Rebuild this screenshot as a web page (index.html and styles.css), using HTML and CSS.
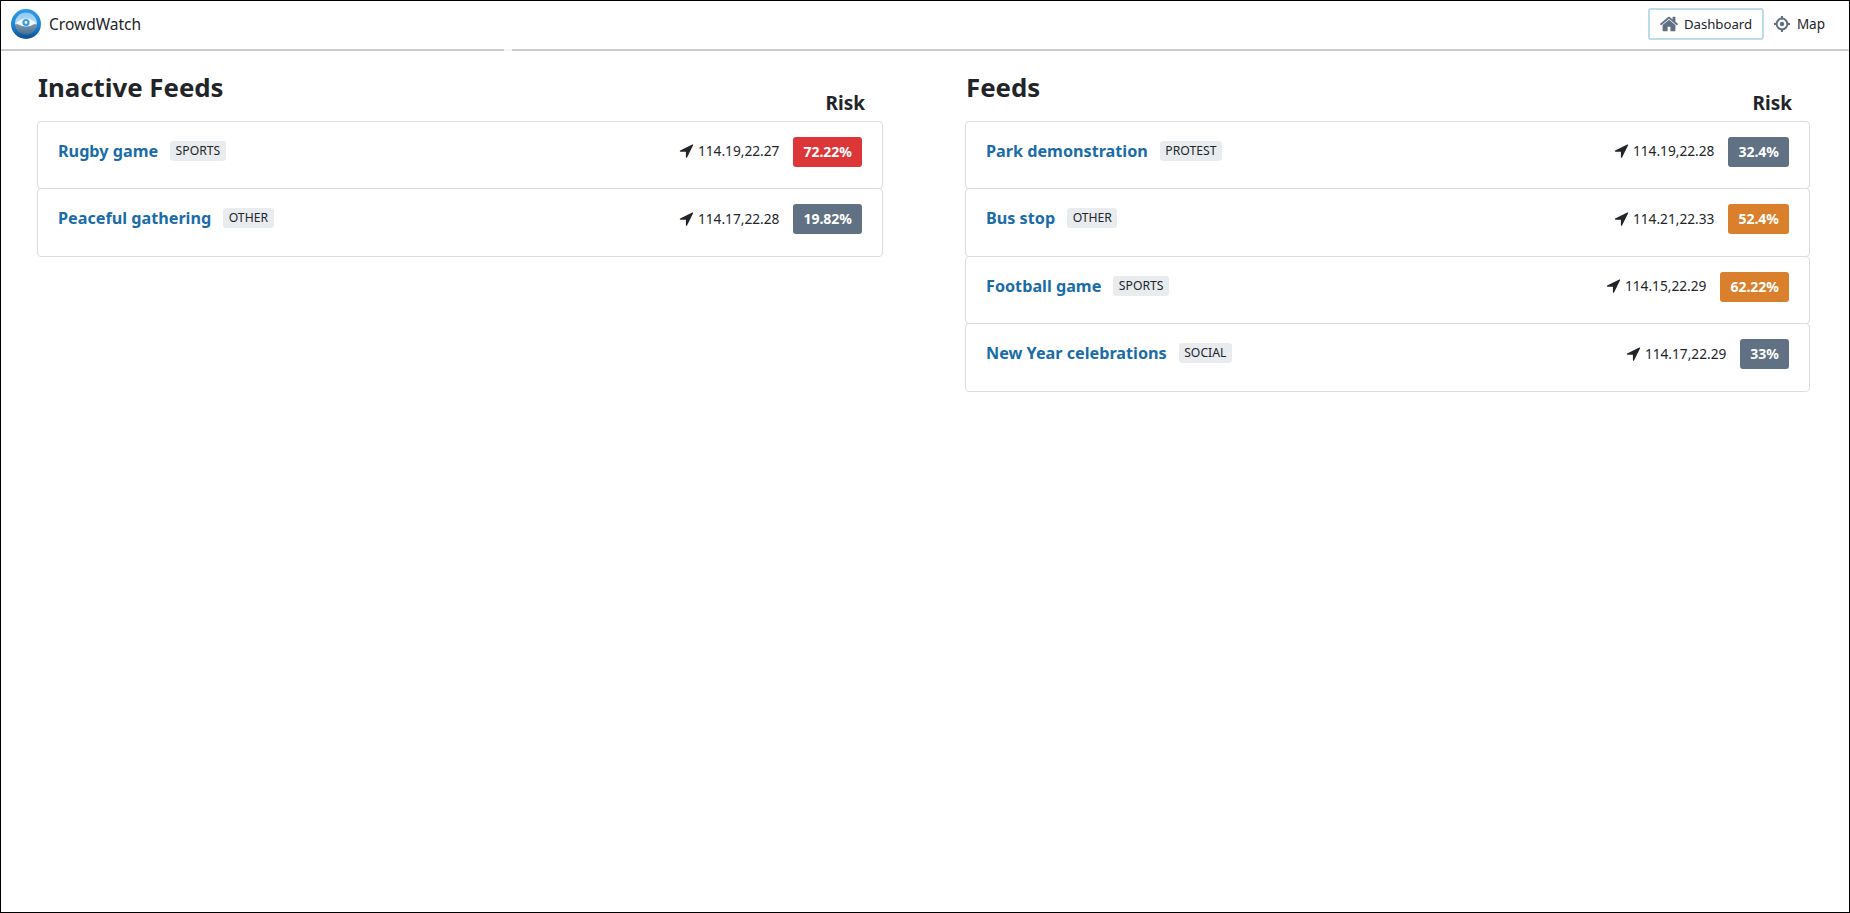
FILE: index.html
```html
<!DOCTYPE html>
<html lang="en">
<head>
<meta charset="utf-8">
<title>CrowdWatch</title>
<link rel="stylesheet" href="styles.css">
</head>
<body>
<svg class="defs" width="0" height="0" aria-hidden="true">
  <defs>
    <symbol id="arrow" viewBox="0 0 1792 1792"><path d="M1593 349l-640 1280q-17 35-57 35-5 0-15-2-22-5-35.5-22.5t-13.5-39.5v-576h-576q-22 0-39.5-13.5t-22.5-35.5 4-42 29-30l1280-640q13-7 29-7 27 0 45 19 15 14 18.5 34.5t-6.5 39.5z"/></symbol>
    <linearGradient id="rim" x1="0" y1="0" x2="0" y2="1"><stop offset="0" stop-color="#2f9be8"/><stop offset="0.55" stop-color="#1d86d8"/><stop offset="1" stop-color="#0d4f8c"/></linearGradient>
    <linearGradient id="lens" x1="0" y1="0" x2="0" y2="1"><stop offset="0" stop-color="#8cc8f2"/><stop offset="0.5" stop-color="#b9dcf4"/><stop offset="0.56" stop-color="#7d95a8"/><stop offset="1" stop-color="#3f6f96"/></linearGradient>
  </defs>
</svg>
<nav class="navbar">
  <a class="brand" href="#">
    <svg class="logo" viewBox="0 0 30 30">
      <circle cx="15" cy="15" r="15" fill="url(#rim)"/>
      <circle cx="15" cy="14.5" r="11" fill="url(#lens)"/>
      <path d="M5 14q10-9 20 0q-10 7-20 0z" fill="#f4f9fd"/>
      <circle cx="15" cy="13.5" r="3.6" fill="#3a9be2"/>
      <circle cx="15" cy="13.5" r="1.4" fill="#e6f3fc"/>
    </svg>
    <span>CrowdWatch</span>
  </a>
  <div class="nav-links">
    <a class="nav-link active" href="#">
      <svg class="nav-icon home" viewBox="0 0 1792 1792"><path d="M1472 992v480q0 26-19 45t-45 19h-384v-384h-256v384h-384q-26 0-45-19t-19-45v-480q0-1 .5-3t.5-3l575-474 575 474q1 2 1 6zm223-69l-62 74q-8 9-21 11h-3q-13 0-21-7l-692-577-692 577q-12 8-24 7-13-2-21-11l-62-74q-8-10-7-23.5t11-21.5l719-599q32-26 76-26t76 26l244 204v-195q0-14 9-23t23-9h192q14 0 23 9t9 23v408l219 182q10 8 11 21.5t-7 23.5z"/></svg>
      <span>Dashboard</span>
    </a>
    <a class="nav-link" href="#">
      <svg class="nav-icon target" viewBox="0 0 16 16">
        <circle cx="8" cy="8" r="5.4" fill="none" stroke-width="2"/>
        <circle cx="8" cy="8" r="2.2"/>
        <path d="M8 0v3.2M8 12.8V16M0 8h3.2M12.8 8H16" fill="none" stroke-width="2"/>
      </svg>
      <span>Map</span>
    </a>
  </div>
</nav>
<main class="columns">
  <section class="col">
    <header class="col-head">
      <h2>Inactive Feeds</h2>
      <h3 class="risk-title risk-left">Risk</h3>
    </header>
    <ul class="list">
      <li class="row">
        <a class="title" href="#">Rugby game</a><span class="tag">SPORTS</span>
        <span class="coord"><svg class="arrow"><use href="#arrow"/></svg>114.19,22.27</span>
        <span class="risk red">72.22%</span>
      </li>
      <li class="row">
        <a class="title" href="#">Peaceful gathering</a><span class="tag">OTHER</span>
        <span class="coord"><svg class="arrow"><use href="#arrow"/></svg>114.17,22.28</span>
        <span class="risk slate">19.82%</span>
      </li>
    </ul>
  </section>
  <section class="col">
    <header class="col-head">
      <h2>Feeds</h2>
      <h3 class="risk-title">Risk</h3>
    </header>
    <ul class="list">
      <li class="row">
        <a class="title" href="#">Park demonstration</a><span class="tag">PROTEST</span>
        <span class="coord"><svg class="arrow"><use href="#arrow"/></svg>114.19,22.28</span>
        <span class="risk slate">32.4%</span>
      </li>
      <li class="row">
        <a class="title" href="#">Bus stop</a><span class="tag">OTHER</span>
        <span class="coord"><svg class="arrow"><use href="#arrow"/></svg>114.21,22.33</span>
        <span class="risk orange">52.4%</span>
      </li>
      <li class="row">
        <a class="title" href="#">Football game</a><span class="tag">SPORTS</span>
        <span class="coord"><svg class="arrow"><use href="#arrow"/></svg>114.15,22.29</span>
        <span class="risk orange">62.22%</span>
      </li>
      <li class="row">
        <a class="title" href="#">New Year celebrations</a><span class="tag">SOCIAL</span>
        <span class="coord"><svg class="arrow"><use href="#arrow"/></svg>114.17,22.29</span>
        <span class="risk slate">33%</span>
      </li>
    </ul>
  </section>
</main>
</body>
</html>
```
FILE: styles.css
```css
* { box-sizing: border-box; }
html, body { margin: 0; padding: 0; }
body {
  height: 100vh;
  border: 1px solid #000;
  background: #fff;
  color: #212529;
  font-family: "Noto Sans", "Open Sans", sans-serif;
  font-size: 14px;
  overflow: hidden;
}
.defs { position: absolute; }
a { text-decoration: none; color: inherit; }

.navbar {
  position: relative;
  display: flex;
  align-items: center;
  justify-content: space-between;
  height: 50px;
  padding: 0 10px 2px 10px;
  border-bottom: 2px solid #cccccc;
}
.navbar::after {
  content: "";
  position: absolute;
  left: 503px;
  bottom: -2px;
  width: 8px;
  height: 2px;
  background: #f4f4f4;
}
.brand { display: flex; align-items: center; gap: 8px; font-size: 15.5px; }
.logo { width: 30px; height: 30px; display: block; }
.nav-links { display: flex; align-items: center; gap: 8px; padding-right: 12px; }
.nav-link {
  display: flex;
  align-items: center;
  font-size: 13.2px;
  border: 2px solid transparent;
  border-radius: 3px;
}
.nav-link.active {
  height: 32px;
  width: 116px;
  padding-left: 9px;
  gap: 5px;
  border-color: #bcdcec;
}
.nav-link:not(.active) { gap: 7px; font-size: 13.5px; }
.nav-icon { display: block; fill: #5f7183; stroke: #5f7183; }
.home { width: 20px; height: 20px; stroke: none; }
.target { width: 16px; height: 16px; }
.target circle:nth-of-type(2) { stroke: none; }

.columns {
  display: grid;
  grid-template-columns: 846px 845px;
  column-gap: 82px;
  padding-left: 36px;
}
.col-head {
  display: flex;
  align-items: flex-end;
  justify-content: space-between;
  height: 69.75px;
  padding: 0 18px 5px 1px;
}
.col-head h2 {
  margin: 0 0 12px;
  font-size: 25.8px;
  line-height: 34px;
  font-weight: 700;
}
.risk-title {
  margin: 0;
  font-size: 19px;
  line-height: 26px;
  font-weight: 700;
}
.list { list-style: none; margin: 0; padding: 0; }
.row {
  display: flex;
  align-items: flex-start;
  height: 68.5px;
  margin-bottom: -1px;
  padding: 15px 20px 0 20px;
  border: 1px solid #dddddd;
  border-radius: 4px;
  background: #fff;
}
.title {
  font-size: 16.2px;
  font-weight: 700;
  line-height: 28px;
  color: #1a6ca8;
}
.tag {
  margin: 4px 0 0 12px;
  height: 20px;
  padding: 0 5.5px;
  border-radius: 3px;
  background: #e9ecef;
  font-size: 12.2px;
  line-height: 20px;
  color: #212529;
}
.coord {
  display: flex;
  align-items: center;
  gap: 3px;
  height: 28px;
  margin-left: auto;
  margin-right: 14px;
  font-size: 13.7px;
  color: #212529;
}
.arrow { width: 17px; height: 17px; fill: #212529; display: block; }
.risk {
  height: 30px;
  padding: 0 10px;
  border-radius: 3px;
  font-size: 14px;
  font-weight: 700;
  line-height: 29px;
  color: #fff;
}
.red { background: #dc3639; }
.slate { background: #5f7183; }
.orange { background: #da7f2c; }
```
